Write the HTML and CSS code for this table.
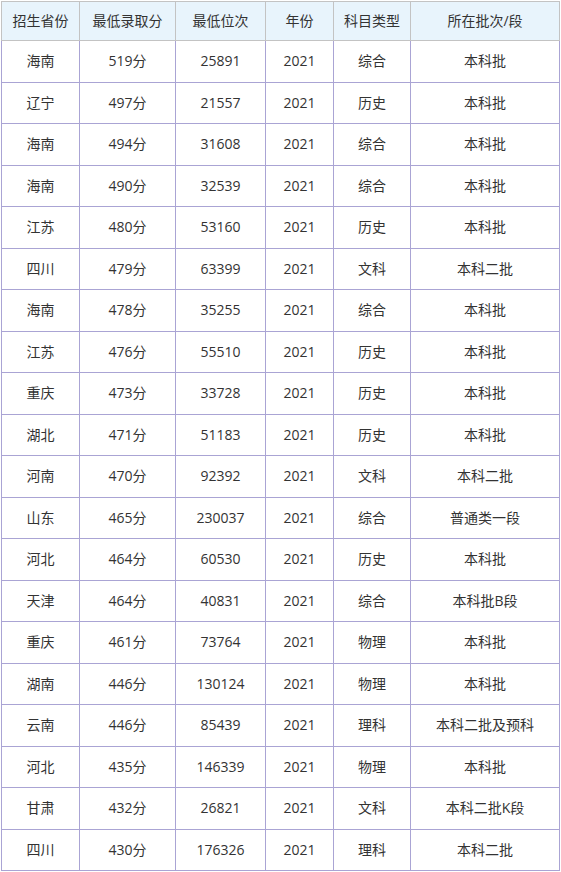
FILE: index.html
```html
<!DOCTYPE html>
<html lang="zh">
<head>
<meta charset="utf-8">
<title>录取分数</title>
<link rel="stylesheet" href="styles.css">
</head>
<body>
<table class="score-table">
<colgroup>
<col class="c1"><col class="c2"><col class="c3"><col class="c4"><col class="c5"><col class="c6">
</colgroup>
<thead>
<tr><th>招生省份</th><th>最低录取分</th><th>最低位次</th><th>年份</th><th>科目类型</th><th>所在批次/段</th></tr>
</thead>
<tbody>
<tr><td>海南</td><td>519分</td><td>25891</td><td>2021</td><td>综合</td><td>本科批</td></tr>
<tr><td>辽宁</td><td>497分</td><td>21557</td><td>2021</td><td>历史</td><td>本科批</td></tr>
<tr><td>海南</td><td>494分</td><td>31608</td><td>2021</td><td>综合</td><td>本科批</td></tr>
<tr><td>海南</td><td>490分</td><td>32539</td><td>2021</td><td>综合</td><td>本科批</td></tr>
<tr><td>江苏</td><td>480分</td><td>53160</td><td>2021</td><td>历史</td><td>本科批</td></tr>
<tr><td>四川</td><td>479分</td><td>63399</td><td>2021</td><td>文科</td><td>本科二批</td></tr>
<tr><td>海南</td><td>478分</td><td>35255</td><td>2021</td><td>综合</td><td>本科批</td></tr>
<tr><td>江苏</td><td>476分</td><td>55510</td><td>2021</td><td>历史</td><td>本科批</td></tr>
<tr><td>重庆</td><td>473分</td><td>33728</td><td>2021</td><td>历史</td><td>本科批</td></tr>
<tr><td>湖北</td><td>471分</td><td>51183</td><td>2021</td><td>历史</td><td>本科批</td></tr>
<tr><td>河南</td><td>470分</td><td>92392</td><td>2021</td><td>文科</td><td>本科二批</td></tr>
<tr><td>山东</td><td>465分</td><td>230037</td><td>2021</td><td>综合</td><td>普通类一段</td></tr>
<tr><td>河北</td><td>464分</td><td>60530</td><td>2021</td><td>历史</td><td>本科批</td></tr>
<tr><td>天津</td><td>464分</td><td>40831</td><td>2021</td><td>综合</td><td>本科批B段</td></tr>
<tr><td>重庆</td><td>461分</td><td>73764</td><td>2021</td><td>物理</td><td>本科批</td></tr>
<tr><td>湖南</td><td>446分</td><td>130124</td><td>2021</td><td>物理</td><td>本科批</td></tr>
<tr><td>云南</td><td>446分</td><td>85439</td><td>2021</td><td>理科</td><td>本科二批及预科</td></tr>
<tr><td>河北</td><td>435分</td><td>146339</td><td>2021</td><td>物理</td><td>本科批</td></tr>
<tr><td>甘肃</td><td>432分</td><td>26821</td><td>2021</td><td>文科</td><td>本科二批K段</td></tr>
<tr><td>四川</td><td>430分</td><td>176326</td><td>2021</td><td>理科</td><td>本科二批</td></tr>
</tbody>
</table>
</body>
</html>
```

FILE: styles.css
```css
html, body {
  margin: 0;
  padding: 0;
  background: #ffffff;
}

body {
  padding: 1px 0 0 1px;
  font-family: "Open Sans", "Noto Sans CJK SC", sans-serif;
  font-size: 14px;
  color: #333333;
}

.score-table {
  border-collapse: collapse;
  table-layout: fixed;
  width: 558px;
}

.c1 { width: 78px; }
.c2 { width: 96px; }
.c3 { width: 90px; }
.c4 { width: 68px; }
.c5 { width: 77px; }
.c6 { width: 149px; }

.score-table th,
.score-table td {
  padding: 0;
  text-align: center;
  font-weight: normal;
  white-space: nowrap;
  line-height: 20px;
}

.score-table th {
  height: 38px;
  background: #e8f4fc;
  border: 1px solid #c3c3c3;
}

.score-table td {
  height: 40.5px;
  border: 1px solid #aaa4d4;
}

.score-table thead tr th {
  border-bottom-color: #c3c3c3;
}
```
